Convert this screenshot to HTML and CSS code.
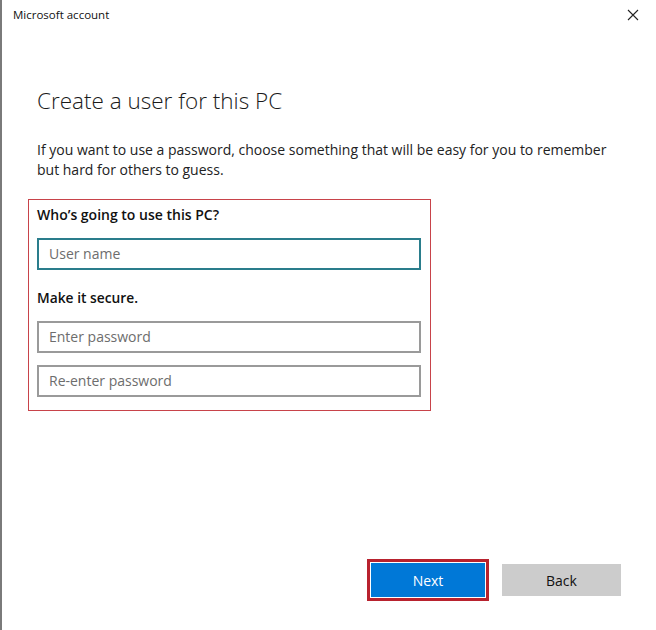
FILE: index.html
```html
<!DOCTYPE html>
<html>
<head>
<meta charset="utf-8">
<link rel="stylesheet" href="styles.css">
</head>
<body>
<div class="window">
  <div class="titlebar">
    <span class="title">Microsoft account</span>
    <span class="close">
      <svg width="12" height="12" viewBox="0 0 12 12"><path d="M1 1L11 11M11 1L1 11" stroke="#222" stroke-width="1.1" fill="none"/></svg>
    </span>
  </div>
  <div class="content">
    <h1 class="heading">Create a user for this PC</h1>
    <p class="intro">If you want to use a password, choose something that will be easy for you to remember but hard for others to guess.</p>
    <div class="highlight">
      <div class="label">Who’s going to use this PC?</div>
      <div class="field focused">User name</div>
      <div class="label secure">Make it secure.</div>
      <div class="field">Enter password</div>
      <div class="field">Re-enter password</div>
    </div>
  </div>
  <div class="footer">
    <div class="btn-ring"><button class="btn primary">Next</button></div>
    <button class="btn secondary">Back</button>
  </div>
</div>
</body>
</html>
```
FILE: styles.css
```css
html, body {
  margin: 0;
  padding: 0;
  background: #ffffff;
}
body {
  font-family: "Open Sans", "Noto Sans", sans-serif;
  color: #1a1a1a;
}
.window {
  width: 656px;
  height: 630px;
  box-sizing: border-box;
  border-left: 2px solid #7a7a7a;
  display: flex;
  flex-direction: column;
}
.titlebar {
  height: 32px;
  display: flex;
  align-items: flex-start;
  justify-content: space-between;
  padding: 0 17px 0 11px;
}
.title {
  font-size: 11.5px;
  margin-top: 7px;
  color: #111;
}
.close {
  margin-top: 9px;
  display: flex;
}
.content {
  flex: 1;
  padding: 0 0 0 35px;
}
.heading {
  font-weight: 300;
  font-size: 22.5px;
  margin: 54px 0 0 0;
  line-height: 30px;
  color: #1a1a1a;
}
.intro {
  font-size: 14px;
  line-height: 20px;
  margin: 24px 0 0 0;
  width: 590px;
  color: #222;
}
.highlight {
  margin: 19px 0 0 -9px;
  width: 403px;
  height: 212px;
  box-sizing: border-box;
  border: 1px solid #c8434a;
  padding: 5px 9px 0 8px;
}
.label {
  font-size: 14px;
  font-weight: 600;
  line-height: 20px;
  color: #111;
}
.label.secure {
  margin-top: 18px;
  font-size: 13.8px;
}
.field {
  width: 384px;
  height: 32px;
  box-sizing: border-box;
  border: 2px solid #9a9a9a;
  padding: 0 10px;
  font-size: 14px;
  line-height: 28px;
  color: #6d6d6d;
  margin-top: 12px;
}
.label + .field {
  margin-top: 13px;
}
.field.focused {
  border-color: #2a7d8c;
}
.footer {
  display: flex;
  justify-content: flex-end;
  align-items: center;
  gap: 13px;
  padding: 0 35px 0 0;
  height: 74px;
  margin-bottom: 13px;
}
.btn-ring {
  border: 3px solid #b8222e;
  padding: 1px;
  display: flex;
}
.btn {
  border: none;
  font-family: "Open Sans", "Noto Sans", sans-serif;
  font-size: 14px;
  height: 32px;
  margin: 0;
  padding: 0;
}
.primary {
  width: 114px;
  height: 34px;
  background: #0078d7;
  color: #ffffff;
}
.secondary {
  width: 119px;
  background: #cccccc;
  color: #111;
}
```
